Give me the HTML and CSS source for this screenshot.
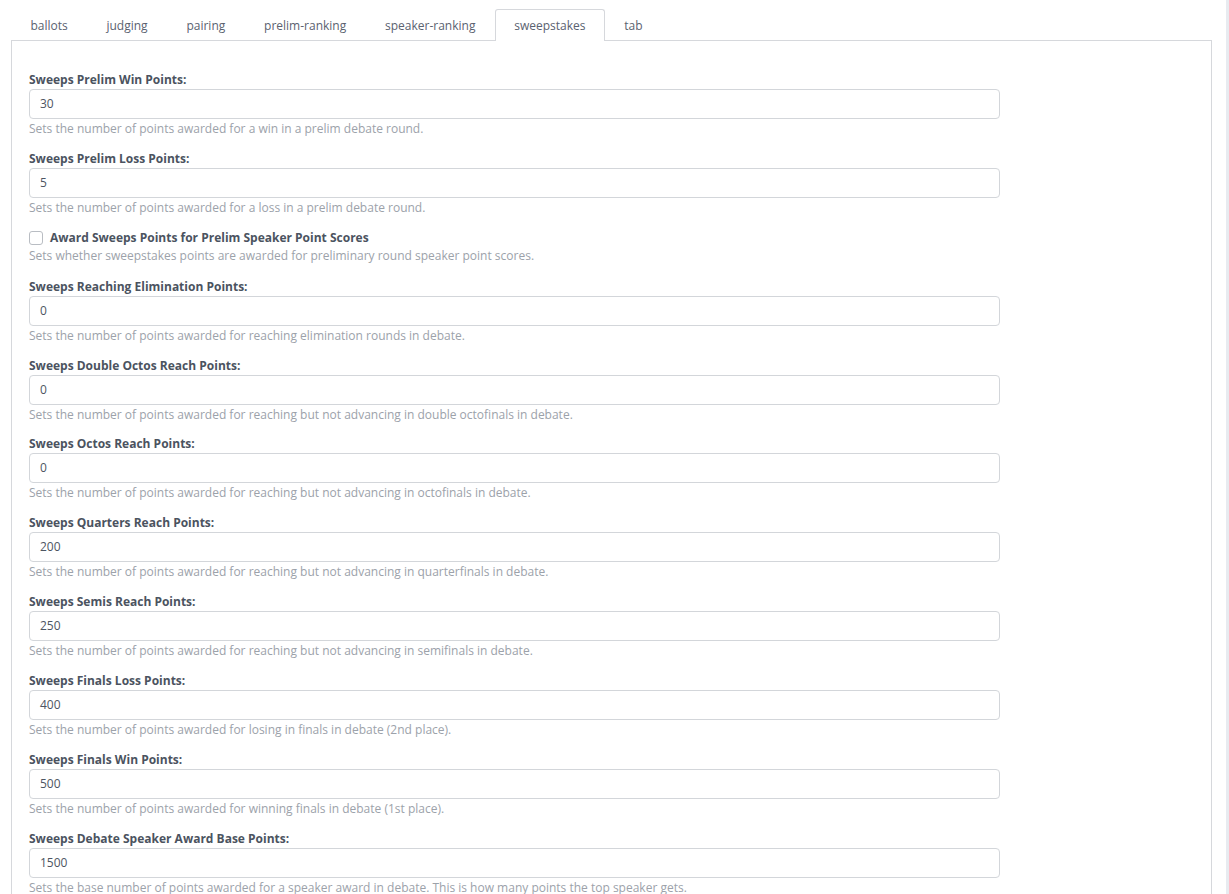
FILE: index.html
```html
<!DOCTYPE html>
<html>
<head>
<meta charset="utf-8">
<link rel="stylesheet" href="styles.css">
</head>
<body>
<div class="page">
  <ul class="tabs">
    <li class="tab">ballots</li>
    <li class="tab">judging</li>
    <li class="tab">pairing</li>
    <li class="tab">prelim-ranking</li>
    <li class="tab">speaker-ranking</li>
    <li class="tab active">sweepstakes</li>
    <li class="tab">tab</li>
  </ul>
  <div class="panel">
    <div class="field">
      <label class="label">Sweeps Prelim Win Points:</label>
      <div class="input">30</div>
      <div class="help">Sets the number of points awarded for a win in a prelim debate round.</div>
    </div>
    <div class="field">
      <label class="label">Sweeps Prelim Loss Points:</label>
      <div class="input">5</div>
      <div class="help">Sets the number of points awarded for a loss in a prelim debate round.</div>
    </div>
    <div class="field check-field">
      <label class="label check-label"><span class="box"></span>Award Sweeps Points for Prelim Speaker Point Scores</label>
      <div class="help">Sets whether sweepstakes points are awarded for preliminary round speaker point scores.</div>
    </div>
    <div class="field">
      <label class="label">Sweeps Reaching Elimination Points:</label>
      <div class="input">0</div>
      <div class="help">Sets the number of points awarded for reaching elimination rounds in debate.</div>
    </div>
    <div class="field">
      <label class="label">Sweeps Double Octos Reach Points:</label>
      <div class="input">0</div>
      <div class="help">Sets the number of points awarded for reaching but not advancing in double octofinals in debate.</div>
    </div>
    <div class="field">
      <label class="label">Sweeps Octos Reach Points:</label>
      <div class="input">0</div>
      <div class="help">Sets the number of points awarded for reaching but not advancing in octofinals in debate.</div>
    </div>
    <div class="field">
      <label class="label">Sweeps Quarters Reach Points:</label>
      <div class="input">200</div>
      <div class="help">Sets the number of points awarded for reaching but not advancing in quarterfinals in debate.</div>
    </div>
    <div class="field">
      <label class="label">Sweeps Semis Reach Points:</label>
      <div class="input">250</div>
      <div class="help">Sets the number of points awarded for reaching but not advancing in semifinals in debate.</div>
    </div>
    <div class="field">
      <label class="label">Sweeps Finals Loss Points:</label>
      <div class="input">400</div>
      <div class="help">Sets the number of points awarded for losing in finals in debate (2nd place).</div>
    </div>
    <div class="field">
      <label class="label">Sweeps Finals Win Points:</label>
      <div class="input">500</div>
      <div class="help">Sets the number of points awarded for winning finals in debate (1st place).</div>
    </div>
    <div class="field">
      <label class="label">Sweeps Debate Speaker Award Base Points:</label>
      <div class="input">1500</div>
      <div class="help">Sets the base number of points awarded for a speaker award in debate. This is how many points the top speaker gets.</div>
    </div>
  </div>
</div>
<div class="scrolltrack"></div>
</body>
</html>
```
FILE: styles.css
```css
html, body {
  margin: 0;
  padding: 0;
  height: 100%;
  overflow: hidden;
  background: #fff;
}
body {
  font-family: "Open Sans", "Liberation Sans", sans-serif;
  font-size: 12px;
  color: #4d5562;
  position: relative;
}
.page {
  padding: 9px 17px 0 11px;
}
.tabs {
  list-style: none;
  margin: 0;
  padding: 0;
  display: flex;
  height: 31px;
  position: relative;
  z-index: 1;
}
.tab {
  padding: 0 18.4px;
  line-height: 31px;
  color: #5a6270;
  border: 1px solid transparent;
  border-bottom: none;
  border-radius: 3px 3px 0 0;
  height: 32px;
  box-sizing: border-box;
}
.tab.active {
  border-color: #d6d8dc;
  background: #fff;
}
.panel {
  border: 1px solid #d6d8dc;
  padding: 30px 17px 0 17px;
  height: 900px;
  box-sizing: border-box;
}
.field {
  max-width: 971px;
  margin-bottom: 12.86px;
}
.field.check-field {
  margin-bottom: 14px;
}
.label {
  display: block;
  font-weight: 700;
  line-height: 16px;
  padding-top: 1px;
  margin-bottom: 1px;
  color: #4b5360;
}
.input {
  height: 30px;
  box-sizing: border-box;
  border: 1px solid #d3d6da;
  border-radius: 4px;
  padding: 0 10px;
  line-height: 28px;
  color: #4d5562;
}
.help {
  line-height: 16px;
  margin-top: 2px;
  color: #9ca2aa;
}
.check-label {
  display: flex;
  align-items: center;
  gap: 7px;
}
.box {
  width: 14px;
  height: 14px;
  box-sizing: border-box;
  border: 1px solid #b9bdc3;
  border-radius: 3px;
}
.scrolltrack {
  position: absolute;
  top: 0;
  right: 0;
  width: 3px;
  height: 100%;
  background: #e8ebf0;
}
```
